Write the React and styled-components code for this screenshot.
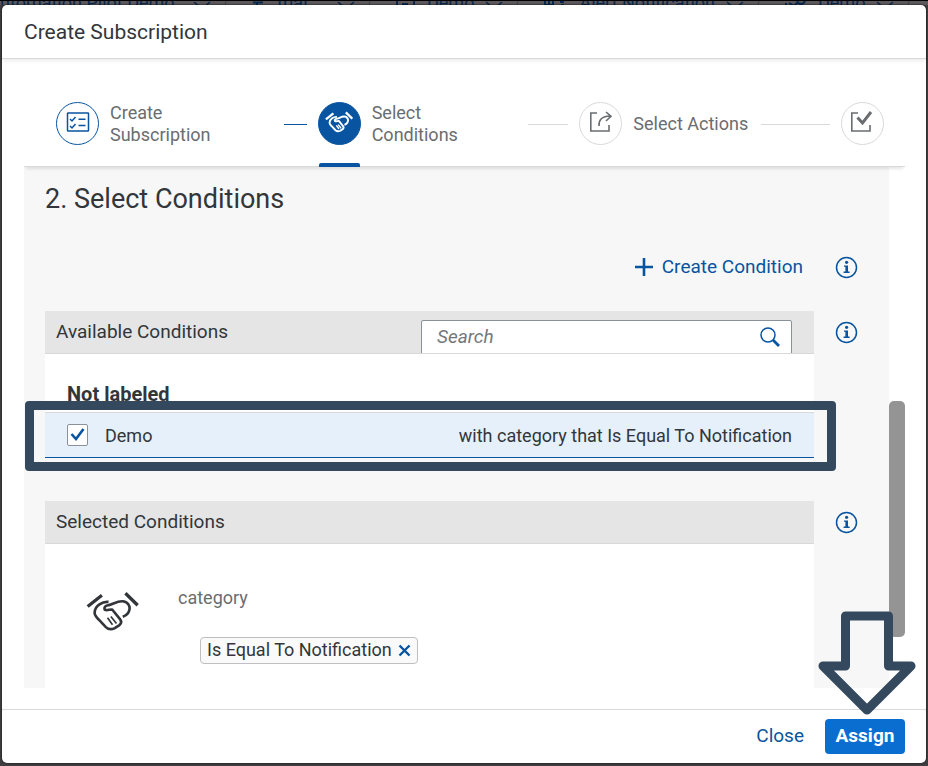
import React from "react";
import styled, { createGlobalStyle } from "styled-components";

const BLUE = "#0854a0";
const TEXT = "#32363a";
const MUTED = "#6a6d70";
const LINE = "#d9d9d9";
const MARK = "#34495e";

const Global = createGlobalStyle`
  *, *::before, *::after { box-sizing: border-box; }
  body {
    margin: 0;
    background: #403e40;
    color: ${TEXT};
    font-family: Roboto, "Liberation Sans", sans-serif;
    font-size: 18px;
    line-height: 22px;
  }
  button { font: inherit; border: 0; padding: 0; background: none; cursor: pointer; }
  h1, h2, h3, p, ol { margin: 0; padding: 0; font-size: inherit; font-weight: 400; }
`;

const Screen = styled.div`
  display: flex;
  flex-direction: column;
  min-height: 100vh;
`;

const Shell = styled.nav`
  display: flex;
  height: 5px;
  overflow: hidden;
  border-top: 1px solid #000;
  background: #5c585b;
  color: #08284e;
  line-height: 4px;
  white-space: nowrap;
`;

const Crumb = styled.span`
  display: flex;
  flex: 0 0 ${(p) => p.$width};
  gap: 11px;
  padding-right: 24px;
  svg { flex: none; }
`;

const CrumbEnd = styled.span`
  display: flex;
  gap: 12px;
  margin-left: auto;
`;

const Dialog = styled.section`
  flex: 1;
  display: flex;
  flex-direction: column;
  margin: 0 2px 3px;
  border-radius: 5px;
  background: #fff;
  box-shadow: 0 0 2px #000;
`;

const TitleBar = styled.header`
  padding: 16px 22px 15px;
  border-bottom: 1px solid ${LINE};
  box-shadow: 0 2px 4px rgba(0, 0, 0, 0.08);
`;

const Title = styled.h1`
  font-size: 21px;
  line-height: 22px;
`;

const Wizard = styled.div`
  flex: 1;
  display: flex;
  flex-direction: column;
  margin: 0 21px 21px 22px;
`;

const Steps = styled.ol`
  position: relative;
  display: grid;
  grid-template-columns: repeat(3, 1fr) auto;
  align-items: center;
  height: 108px;
  padding: 21px 21px 0 32px;
  list-style: none;
  border-bottom: 1px solid ${LINE};
  box-shadow: 0 4px 3px -2px rgba(0, 0, 0, 0.1);
`;

const Step = styled.li`
  display: flex;
  align-items: center;
  gap: 11px;
  padding-right: ${(p) => (p.$last ? "0" : "11px")};
`;

const StepButton = styled.button`
  display: flex;
  align-items: center;
  gap: 11px;
  flex: 0 0 ${(p) => p.$width};
  color: ${MUTED};
  text-align: left;
`;

const StepLabel = styled.span`
  padding-top: 2px;
`;

const Circle = styled.span`
  position: relative;
  display: flex;
  align-items: center;
  justify-content: center;
  flex: none;
  width: 43px;
  height: 43px;
  padding-bottom: 2px;
  border-radius: 50%;
  border: 1px solid ${(p) => (p.$state === "todo" ? LINE : BLUE)};
  background: ${(p) => (p.$state === "active" ? BLUE : "#fff")};
  color: ${(p) => (p.$state === "active" ? "#fff" : p.$state === "done" ? BLUE : MUTED)};
  &::after {
    content: "";
    display: ${(p) => (p.$state === "active" ? "block" : "none")};
    position: absolute;
    top: 60px;
    left: 0;
    right: 0;
    height: 4px;
    border-radius: 2px 2px 0 0;
    background: ${BLUE};
  }
`;

const Connector = styled.span`
  flex: 1;
  height: 1px;
  margin-top: 2px;
  background: ${(p) => (p.$done ? BLUE : LINE)};
`;

const Scroller = styled.div`
  flex: 1;
  display: flex;
`;

const Content = styled.main`
  flex: 1;
  display: flex;
  flex-direction: column;
  padding: 16px 31px 0 21px;
  background: #f7f7f7;
`;

const Heading = styled.h2`
  font-size: 27px;
  line-height: 32px;
`;

const Track = styled.div`
  width: 16px;
  padding-top: 234px;
`;

const Thumb = styled.div`
  height: 236px;
  border-radius: 5px;
  background: #949494;
`;

const Row = styled.div`
  display: grid;
  grid-template-columns: 1fr 23px;
  column-gap: 21px;
  align-items: start;
  flex: ${(p) => (p.$grow ? "1" : "none")};
  margin-top: ${(p) => p.$top};
`;

const InfoButton = styled.button`
  display: flex;
  margin-top: ${(p) => p.$top || "0"};
  color: ${BLUE};
`;

const CreateButton = styled.button`
  display: flex;
  align-items: center;
  gap: 8px;
  justify-self: end;
  margin-right: 11px;
  color: ${BLUE};
  font-size: 19px;
`;

const Panel = styled.section`
  align-self: stretch;
  background: #fff;
`;

const PanelBar = styled.div`
  display: flex;
  justify-content: space-between;
  align-items: flex-start;
  height: 43px;
  overflow: hidden;
  padding: 9px 22px 0 11px;
  border-bottom: 1px solid ${LINE};
  background: #e5e5e5;
`;

const PanelTitle = styled.h3`
  font-size: 19px;
  line-height: 24px;
`;

const SearchBox = styled.label`
  display: flex;
  align-items: center;
  flex: 0 0 371px;
  height: 36px;
  padding: 0 10px 2px 15px;
  border: 1px solid #89919a;
  border-radius: 2px;
  background: #fff;
  color: ${BLUE};
`;

const SearchInput = styled.input`
  flex: 1;
  min-width: 0;
  padding: 0;
  border: 0;
  outline: 0;
  background: transparent;
  font: inherit;
  font-size: 19px;
  &::placeholder { color: #74777a; font-style: italic; opacity: 1; }
`;

const GroupTitle = styled.h3`
  padding: 29px 22px 7px;
  font-size: 20px;
  font-weight: 700;
`;

const Condition = styled.div`
  position: relative;
  display: flex;
  align-items: center;
  height: 46px;
  padding: 2px 22px 0;
  border-top: 1px solid ${LINE};
  border-bottom: 1px solid ${BLUE};
  background: #e5f0fa;
`;

const CheckLabel = styled.label`
  display: flex;
  align-items: center;
  gap: 17px;
  flex: 1;
`;

const Check = styled.input`
  appearance: none;
  width: 21px;
  height: 22px;
  margin: 0;
  border: 1px solid #89919a;
  border-radius: 2px;
  background: #fff;
`;

const CheckCell = styled.span`
  display: grid;
  padding-bottom: 2px;
  > * { grid-area: 1 / 1; place-self: center; }
  svg { pointer-events: none; margin-bottom: 2px; }
`;

const Highlight = styled.div`
  position: absolute;
  inset: -12px -22px -14px -20px;
  border: 9px solid ${MARK};
  border-radius: 4px;
  pointer-events: none;
`;

const Selected = styled.div`
  display: flex;
  padding: 43px 41px 0;
  gap: 39px;
  svg { flex: none; }
`;

const SelectedIcon = styled.span`
  display: flex;
  padding-top: 4px;
`;

const Attribute = styled.div`
  color: ${MUTED};
`;

const Token = styled.span`
  display: flex;
  align-items: center;
  gap: 6px;
  height: 27px;
  margin: 28px 0 0 22px;
  padding: 0 6px 1px;
  border: 1px solid #bfbfbf;
  border-radius: 4px;
  background: #fafafa;
  color: ${TEXT};
`;

const TokenRemove = styled.button`
  display: flex;
  color: ${BLUE};
`;

const Footer = styled.footer`
  position: relative;
  display: flex;
  justify-content: flex-end;
  align-items: flex-start;
  gap: 21px;
  height: 54px;
  padding: 9px 21px 0;
  border-top: 1px solid ${LINE};
`;

const FooterButton = styled.button`
  height: 35px;
  padding-bottom: 2px;
  border-radius: 4px;
  color: ${(p) => (p.$primary ? "#fff" : BLUE)};
  background: ${(p) => (p.$primary ? "#0a6ed1" : "none")};
  font-size: 19px;
  font-weight: ${(p) => (p.$primary ? 700 : 400)};
  min-width: ${(p) => (p.$primary ? "80px" : "0")};
`;

const Pointer = styled.svg`
  position: absolute;
  right: 10px;
  bottom: 47px;
  pointer-events: none;
`;

const Handshake = ({ width, height, weight = 8 }) => (
  <svg width={width} height={height} viewBox="196 306 160 122" fill="none" stroke="currentColor" strokeWidth={weight} strokeLinejoin="round" aria-hidden="true">
    <path d="M201 352L244 318M315 312L352 348" strokeWidth={weight + 2} />
    <path d="M264 338C247 336 222 349 222 371C222 378 227 384 234 391L256 414C263 421 273 422 283 417L297 408C304 402 303 395 298 389L275 361C267 360 261 365 253 362C250 356 253 350 260 349C275 347 289 335 306 336C322 337 330 350 327 362C325 373 318 379 307 383" />
    <path d="M261 386L276 407M271 382L288 403" strokeWidth={weight - 3} />
  </svg>
);

const Checklist = () => (
  <svg width="24" height="20" viewBox="0 0 24 20" fill="none" stroke="currentColor" strokeWidth="1.5" aria-hidden="true">
    <rect x="1.5" y="1" width="21" height="18" rx="0.6" />
    <path d="M4 7L6 9L9.5 5M4 14L6 16L9.5 12M12.5 7.2H19.5M12.5 13.6H19.5" />
  </svg>
);

const Action = () => (
  <svg width="24" height="24" viewBox="0 0 24 24" fill="none" stroke="currentColor" strokeWidth="1.6" aria-hidden="true">
    <path d="M8 3H1.8V21H20V15M10 16C9.5 10 13 6 21 6M17 2L22 6.3L17 11" />
  </svg>
);

const Complete = () => (
  <svg width="24" height="24" viewBox="0 0 24 24" fill="none" stroke="currentColor" strokeWidth="1.6" aria-hidden="true">
    <path d="M8 3H1.8V21H20V15" />
    <path d="M7.5 7.5L12.5 13L21 2" strokeWidth="3" />
  </svg>
);

const Info = ({ top }) => (
  <InfoButton $top={top} aria-label="More information">
    <svg width="23" height="23" viewBox="0 0 23 23" aria-hidden="true">
      <circle cx="11.5" cy="11.5" r="10" fill="none" stroke="currentColor" strokeWidth="1.5" />
      <circle cx="11.6" cy="6.3" r="1.6" fill="currentColor" />
      <path d="M9 9.4H13V15.6H14.6V17H8.6V15.6H10.4V10.8H9Z" fill="currentColor" />
    </svg>
  </InfoButton>
);

const Chevron = () => (
  <svg width="18" height="8" viewBox="0 0 18 8" fill="none" stroke="currentColor" strokeWidth="1.5" aria-hidden="true">
    <path d="M1 1L9 8L17 1" />
  </svg>
);

const Slash = () => (
  <svg width="5" height="8" viewBox="0 0 5 8" fill="none" stroke="#444145" aria-hidden="true">
    <path d="M3 0L1 8" />
  </svg>
);

const shellIcons = {
  account: { width: 14, d: "M1 1.5H11M5 2V7" },
  space: { width: 20, d: "M1 0V6M6 3H12M18 0V6" },
  service: { width: 24, d: "M1 0V6M5 0V6M9 0V6M2 4H8M16 1H20M17 4H20" },
  instance: { width: 22, d: "M1 2V7M4 2L9 5L12 2M12 0C14 4 18 4 20 0" },
};

const ShellIcon = ({ name }) => (
  <svg width={shellIcons[name].width} height="8" viewBox={`0 0 ${shellIcons[name].width} 8`} fill="none" stroke="currentColor" strokeWidth="2" aria-hidden="true">
    <path d={shellIcons[name].d} />
  </svg>
);

const crumbs = [
  { label: "utomation Pilot Demo", width: "252px" },
  { label: "trial", width: "144px", icon: "account" },
  { label: "Demo", width: "148px", icon: "space" },
  { label: "Alert Notification", width: "240px", icon: "service" },
  { label: "Demo", width: "140px", icon: "instance" },
];

export default function App() {
  return (
    <>
      <Global />
      <Screen>
        <Shell aria-label="Breadcrumb">
          {crumbs.map((crumb) => (
            <Crumb key={crumb.width} $width={crumb.width}>
              {crumb.icon && <ShellIcon name={crumb.icon} />}
              {crumb.label}
              <CrumbEnd><Chevron /><Slash /></CrumbEnd>
            </Crumb>
          ))}
        </Shell>
        <Dialog role="dialog" aria-labelledby="dialog-title">
          <TitleBar>
            <Title id="dialog-title">Create Subscription</Title>
          </TitleBar>
          <Wizard>
            <Steps>
              <Step>
                <StepButton $width="217px">
                  <Circle $state="done"><Checklist /></Circle>
                  <StepLabel>Create<br />Subscription</StepLabel>
                </StepButton>
                <Connector $done />
              </Step>
              <Step>
                <StepButton $width="199px" aria-current="step">
                  <Circle $state="active"><Handshake width="28" height="22" weight={11} /></Circle>
                  <StepLabel>Select<br />Conditions</StepLabel>
                </StepButton>
                <Connector />
              </Step>
              <Step>
                <StepButton $width="171px">
                  <Circle $state="todo"><Action /></Circle>
                  <StepLabel>Select Actions</StepLabel>
                </StepButton>
                <Connector />
              </Step>
              <Step $last>
                <StepButton $width="43px" aria-label="Review">
                  <Circle $state="todo"><Complete /></Circle>
                </StepButton>
              </Step>
            </Steps>
            <Scroller>
              <Content>
                <Heading>2. Select Conditions</Heading>
                <Row $top="41px">
                  <CreateButton>
                    <svg width="20" height="20" viewBox="0 0 20 20" stroke="currentColor" strokeWidth="2.6" aria-hidden="true">
                      <path d="M10 1V19M1 10H19" />
                    </svg>
                    Create Condition
                  </CreateButton>
                  <Info />
                </Row>
                <Row $top="32px">
                  <Panel>
                    <PanelBar>
                      <PanelTitle>Available Conditions</PanelTitle>
                      <SearchBox>
                        <SearchInput type="text" placeholder="Search" aria-label="Search conditions" />
                        <svg width="22" height="22" viewBox="0 0 22 22" fill="none" stroke="currentColor" aria-hidden="true">
                          <circle cx="9" cy="9" r="7" strokeWidth="1.5" />
                          <path d="M14 14L20 20" strokeWidth="2.8" />
                        </svg>
                      </SearchBox>
                    </PanelBar>
                    <GroupTitle>Not labeled</GroupTitle>
                    <Condition>
                      <CheckLabel>
                        <CheckCell>
                          <Check type="checkbox" defaultChecked />
                          <svg width="15" height="13" viewBox="0 0 15 13" fill="none" stroke={BLUE} strokeWidth="2.6" aria-hidden="true">
                            <path d="M1.5 6L6 11L13.5 1" />
                          </svg>
                        </CheckCell>
                        Demo
                      </CheckLabel>
                      <span>with category that Is Equal To Notification</span>
                      <Highlight />
                    </Condition>
                  </Panel>
                  <Info top="10px" />
                </Row>
                <Row $top="43px" $grow>
                  <Panel>
                    <PanelBar>
                      <PanelTitle>Selected Conditions</PanelTitle>
                    </PanelBar>
                    <Selected>
                      <SelectedIcon>
                        <Handshake width="53" height="41" />
                      </SelectedIcon>
                      <Attribute>
                        category
                        <Token>
                          Is Equal To Notification
                          <TokenRemove aria-label="Remove Is Equal To Notification">
                            <svg width="13" height="13" viewBox="0 0 13 13" stroke="currentColor" strokeWidth="2.4" aria-hidden="true">
                              <path d="M1.5 1.5L11.5 11.5M11.5 1.5L1.5 11.5" />
                            </svg>
                          </TokenRemove>
                        </Token>
                      </Attribute>
                    </Selected>
                  </Panel>
                  <Info top="10px" />
                </Row>
              </Content>
              <Track>
                <Thumb />
              </Track>
            </Scroller>
          </Wizard>
          <Footer>
            <FooterButton>Close</FooterButton>
            <FooterButton $primary>Assign</FooterButton>
            <Pointer width="98" height="106" viewBox="0 0 98 106" fill="none" stroke={MARK} strokeWidth="9" strokeLinejoin="round" aria-hidden="true">
              <path d="M27.5 6H70.5V56H93L49 100L5 56H27.5Z" />
            </Pointer>
          </Footer>
        </Dialog>
      </Screen>
    </>
  );
}
